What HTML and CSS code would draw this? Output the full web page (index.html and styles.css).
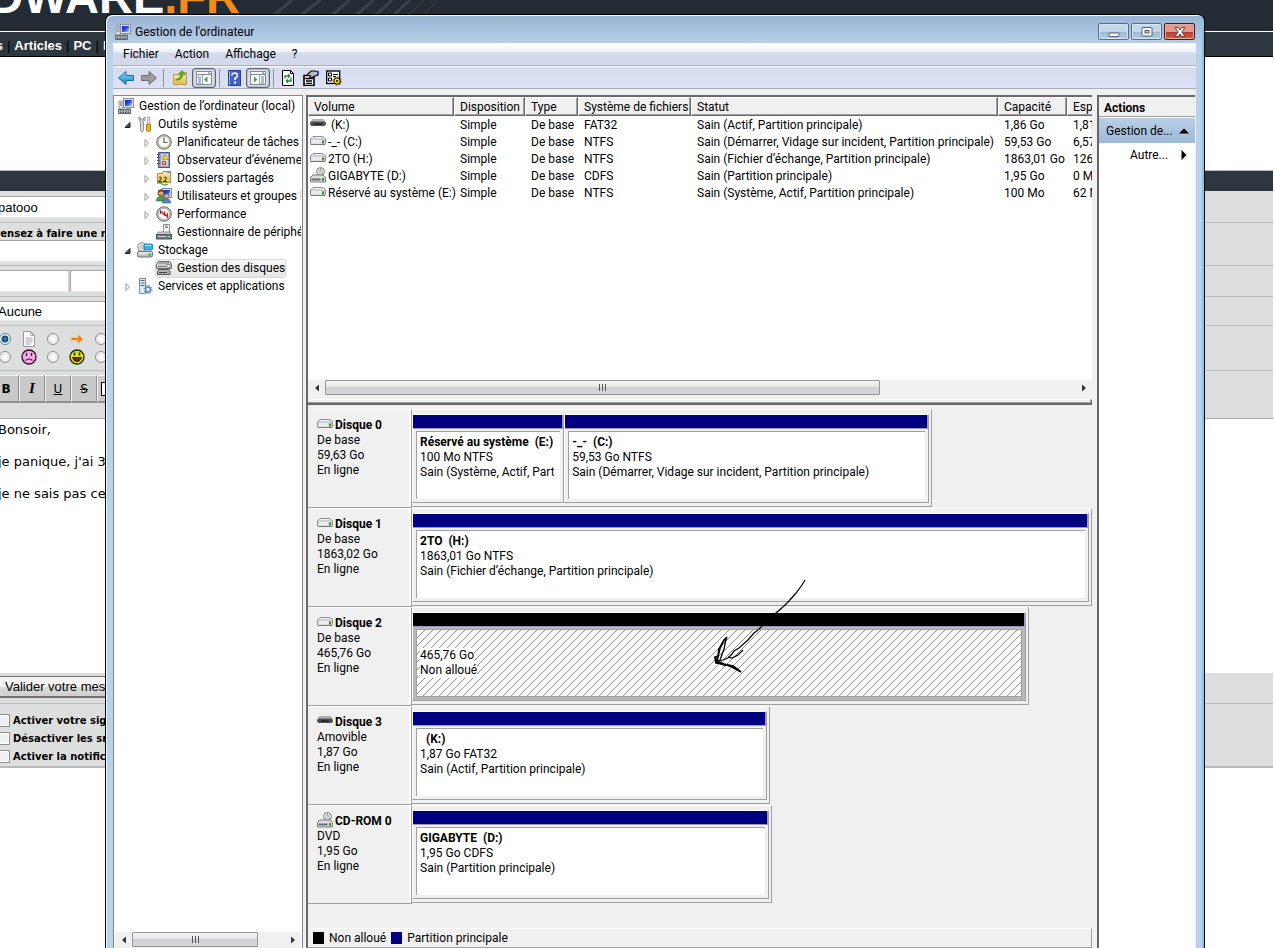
FILE: index.html
```html
<!DOCTYPE html>
<html lang="fr">
<head>
<meta charset="utf-8">
<title>Gestion de l'ordinateur</title>
<link rel="stylesheet" href="styles.css">
</head>
<body>
<svg class="sprite" aria-hidden="true">
  <defs>
    <linearGradient id="metal" x1="0" y1="0" x2="0" y2="1"><stop offset="0" stop-color="#f4f4f4"/><stop offset="1" stop-color="#a9adb0"/></linearGradient>
    <linearGradient id="blue" x1="0" y1="0" x2="0" y2="1"><stop offset="0" stop-color="#8fdcfb"/><stop offset="1" stop-color="#1583cc"/></linearGradient>
    <linearGradient id="screen" x1="0" y1="0" x2="1" y2="1"><stop offset="0" stop-color="#0a1fae"/><stop offset=".5" stop-color="#2850e0"/><stop offset="1" stop-color="#b8d4ff"/></linearGradient>
    <linearGradient id="folder" x1="0" y1="0" x2="0" y2="1"><stop offset="0" stop-color="#fbeeb0"/><stop offset="1" stop-color="#e3b958"/></linearGradient>
  </defs>
  <symbol id="i-computer" viewBox="0 0 16 16">
    <rect x="5.500" y=".5" width="10" height="9" fill="#dfe3e8" stroke="#8a929c"/><rect x="7" y="2" width="7" height="6" fill="url(#screen)"/>
    <path d="M1 3h4v8H1z" fill="#e3e6ea" stroke="#7d858f" stroke-width=".8"/><path d="M2 5h2M2 7h2" stroke="#667"/>
    <path d="M8 10h5v2H8z" fill="#a9afb6"/><path d="M.5 11.500h12v4H.5z" fill="#b4b9c0" stroke="#5d646d"/><path d="M2 13h9M2 14.500h9" stroke="#555c66" stroke-dasharray="1.500 1"/>
  </symbol>
  <symbol id="i-tools" viewBox="0 0 16 16">
    <path d="M2 1v3l1.500 1.500V14c0 2 3 2 3 0V5.500L8 4V1L6.500 2v2h-3V2z" fill="#dcdcdc" stroke="#777" stroke-width=".8"/>
    <path d="M10.500 1h2l.3 7h-2.600z" fill="#eee" stroke="#888" stroke-width=".7"/><path d="M9.500 8.500h4v6q-2 2.500-4 0z" fill="#f0b41c" stroke="#9a6a08" stroke-width=".8"/>
  </symbol>
  <symbol id="i-clock" viewBox="0 0 16 16">
    <circle cx="8" cy="8" r="7.300" fill="#bdbdbd" stroke="#777"/><circle cx="8" cy="8" r="5.700" fill="#fdf8e8" stroke="#a89e80" stroke-width=".6"/><path d="M8 3.500V8.500H11.500" fill="none" stroke="#47668e" stroke-width="1.200"/>
  </symbol>
  <symbol id="i-event" viewBox="0 0 16 16">
    <rect x="2.500" y=".5" width="11" height="15" fill="#8f9fc4" stroke="#4a5a86"/><rect x="5" y="2" width="7" height="12" fill="#d3daea"/><path d="M6 4h5M6 6h5M6 12.500h5" stroke="#7d8cb4" stroke-width=".7"/><path d="M1 2.500h3M1 5.500h3M1 8.500h3M1 11.500h3" stroke="#555"/><path d="M9 2.500l3 5H6.500z" fill="#ffd820" stroke="#a98500" stroke-width=".6"/><circle cx="8" cy="11" r="2.300" fill="#d83030"/><path d="M7 10l2 2m0-2l-2 2" stroke="#fff" stroke-width=".8"/>
  </symbol>
  <symbol id="i-shared" viewBox="0 0 16 16">
    <path d="M1.500 3.500h5l1-2h7v11h-13z" fill="url(#folder)" stroke="#b88c32"/><path d="M11 2.500h3" stroke="#58a0e0"/><path d="M3 7.500q3-1 2 1.500l-2 2.500h3M8 7.500q3-1 2 1.500l-2 2.500h3" fill="none" stroke="#5c481a" stroke-width="1.200"/><path d="M1 13q3-1 5 1q3 2 6 0" fill="none" stroke="#39a865" stroke-width="1.500"/>
  </symbol>
  <symbol id="i-users" viewBox="0 0 16 16">
    <rect x="6.500" y=".5" width="9" height="9" fill="#dce2ea" stroke="#808a98"/><rect x="8" y="2" width="6" height="6" fill="url(#screen)"/><circle cx="5" cy="5" r="3" fill="#d7a978" stroke="#6c4722"/><path d="M2 5q0-4 3-3.500 3.500 0 3 3-3-2-6 .5" fill="#63401f"/><path d="M.5 13q0-5 5-4.500 4 0 4 4.500z" fill="#4a9b52" stroke="#2e6734" stroke-width=".6"/><circle cx="10.500" cy="8" r="2.300" fill="#dcb083" stroke="#6b5030" stroke-width=".6"/><path d="M6.500 15q0-4.500 4-4.500t4 4.500z" fill="#5684c2" stroke="#31517f" stroke-width=".6"/>
  </symbol>
  <symbol id="i-perf" viewBox="0 0 16 16">
    <circle cx="8" cy="8" r="7.300" fill="#c2c2c2" stroke="#6f6f6f"/><circle cx="8" cy="8" r="5.600" fill="#fff" stroke="#888" stroke-width=".5"/><path d="M4.500 8V5l4 4V5M8 7l3.500 4V7" fill="none" stroke="#cc2020" stroke-width="1.200"/>
  </symbol>
  <symbol id="i-device" viewBox="0 0 16 16">
    <path d="M7.500.5h6v8h-6z" fill="#f2f4f6" stroke="#8d949b"/><path d="M9 2h3M9 3.500h3" stroke="#5aa05a"/><path d="M2 8h12l1.500 3h-15z" fill="#cdd1d5" stroke="#70777e" stroke-width=".7"/><rect x=".5" y="10.500" width="15" height="4.500" fill="#737b83" stroke="#4e545a"/><path d="M2 12.500h8" stroke="#c9cdd1"/><path d="M12 12.500h2" stroke="#6f6"/>
  </symbol>
  <symbol id="i-storage" viewBox="0 0 16 16">
    <circle cx="5" cy="5" r="4.300" fill="#ddd" stroke="#888" stroke-width=".8"/><circle cx="5" cy="5" r="1.300" fill="#fff" stroke="#999" stroke-width=".6"/><rect x="7" y="2" width="8.500" height="6" rx="1" fill="#3cb2dc" stroke="#23708e" stroke-width=".8"/><path d="M8 3.500h6" stroke="#c4effc"/><rect x=".5" y="9.500" width="15" height="5.500" rx="1.500" fill="url(#metal)" stroke="#6e7478"/><rect x="11.500" y="11.500" width="2.500" height="2" fill="#3fae3f"/>
  </symbol>
  <symbol id="i-diskmgmt" viewBox="0 0 16 16">
    <path d="M2.500 1.500h11l2 3v4H.5v-4z" fill="#cfcfcf" stroke="#6d6d6d"/><path d="M3 3h10M2 6.500h8" stroke="#777"/><rect x="11" y="4.500" width="3" height="3" fill="#f4f4f4" stroke="#666" stroke-width=".6"/><path d="M2.500 9.500h10l1.500 2v3H1.500v-3z" fill="#b0b0b0" stroke="#555"/><path d="M3 12.500h8" stroke="#444"/>
  </symbol>
  <symbol id="i-services" viewBox="0 0 16 16">
    <path d="M2.500.5h6v15h-6z" fill="#e5eaee" stroke="#7e8a94"/><path d="M3.500 2.500h4M3.500 5h4M3.500 7.500h4" stroke="#4a6d88"/><circle cx="11" cy="11.500" r="2.600" fill="#d9e7f5" stroke="#5f87b5" stroke-width="1.500"/><circle cx="11" cy="11.500" r="4" fill="none" stroke="#5f87b5" stroke-width="1" stroke-dasharray="1.600 1.500"/>
  </symbol>
  <symbol id="i-hdd" viewBox="0 0 16 16">
    <path d="M3 3.500h10l2.500 2.500v4.500q0 1-1 1h-13q-1 0-1-1V6z" fill="#d0d1d2" stroke="#8d9092"/><path d="M3 4.500h10" stroke="#f2f2f2"/><rect x="1.500" y="7" width="10" height="3.500" fill="#ececec"/><rect x="12" y="7.500" width="2" height="3" fill="#38963a"/><path d="M1 11.500h14" stroke="#77797b"/>
  </symbol>
  <symbol id="i-usb" viewBox="0 0 16 16">
    <path d="M2.500 3.500h11L16 7q0 3-2 3H2Q0 10 0 7z" fill="#4d4f51"/><path d="M2.500 3.500h11L15 5.500H1z" fill="#b4b6b8"/><path d="M4 8h8" stroke="#222" stroke-width="1.500"/>
  </symbol>
  <symbol id="i-cd" viewBox="0 0 16 16">
    <circle cx="10.500" cy="4.500" r="4" fill="#ddd8e4" stroke="#8d8d8d"/><path d="M10.500.8v3M12 6l2 1.500" stroke="#76b876"/><circle cx="10.500" cy="4.500" r="1.200" fill="#fff" stroke="#888" stroke-width=".6"/><path d="M3 8h10l2.500 2.500v4.500H.5v-4.500z" fill="#dcdcdc" stroke="#7b7e80"/><rect x="1.500" y="11.500" width="9" height="2" fill="#6a6d70"/><rect x="12" y="11" width="2" height="3" fill="#38963a"/>
  </symbol>
  <symbol id="i-open" viewBox="0 0 8 8"><path d="M6.500 1.500v5h-5z" fill="#444" stroke="#222"/></symbol>
  <symbol id="i-closed" viewBox="0 0 8 8"><path d="M2.500.5L6 4 2.500 7.500z" fill="#fff" stroke="#999"/></symbol>
  <symbol id="i-left" viewBox="0 0 8 8"><path d="M6 .5v7L2 4z" fill="#333"/></symbol>
  <symbol id="i-right" viewBox="0 0 8 8"><path d="M2 .5v7L6 4z" fill="#333"/></symbol>
</svg>

<main class="site">
  <header class="banner">
    <svg class="circuit" viewBox="0 0 320 31" aria-hidden="true"><path d="M0 18L22 0M20 24L50 0M56 20L80 0M80 20L104 0M96 24L122 0M114 24L140 0" stroke="#3a424b" stroke-width="3" fill="none"/><path d="M136 18l18-18M150 18l18-18" stroke="#4a4238" fill="none"/></svg>
    <p class="logo">DWARE<span class="logo-tld">.FR</span></p>
  </header>
  <nav class="site-nav"><a href="#">News</a><i>|</i><a href="#">Articles</a><i>|</i><a href="#">PC</a><i>|</i><a href="#">Image</a></nav>
  <div class="site-gap"></div>
  <form class="post">
    <div class="post-head"></div>
    <div class="post-row row-name"><input class="field" aria-label="Pseudo" value="patooo"></div>
    <div class="post-row row-title"><label class="hint" for="subject">Pensez à faire une recherche</label><input class="field" id="subject"></div>
    <div class="post-row row-split"><input class="field" aria-label="Code"><input class="field" aria-label="Options"></div>
    <div class="post-row row-select"><select class="field" aria-label="Catégorie"><option>Aucune</option></select></div>
    <div class="post-row moods">
      <input type="radio" name="mood" aria-label="Normal" checked>
      <svg viewBox="0 0 16 16"><path d="M2.500.5h7l4 4v11h-11z" fill="#fbfbfb" stroke="#999"/><path d="M9.500.5v4h4M4.500 7h7M4.500 9h7M4.500 11h7M4.500 13h5" fill="none" stroke="#aab"/></svg>
      <input type="radio" name="mood" aria-label="Flèche">
      <svg viewBox="0 0 16 16"><path d="M2 6.500h7V3l5 5-5 5V9.500H2z" fill="#ee8414" stroke="#f8c890" stroke-width=".8"/></svg>
      <input type="radio" name="mood" aria-label="Autre">
      <input type="radio" name="mood" aria-label="Triste">
      <svg viewBox="0 0 16 16"><circle cx="8" cy="8" r="7" fill="#f6a8e6" stroke="#301028" stroke-width="1.300"/><path d="M5.500 4v3M10.500 4v3M4.500 11.500q3.500-3 7 0" fill="none" stroke="#301028" stroke-width="1.200"/></svg>
      <input type="radio" name="mood" aria-label="Content">
      <svg viewBox="0 0 16 16"><circle cx="8" cy="8" r="7" fill="#dbe420" stroke="#202808" stroke-width="1.300"/><path d="M5.500 3.500v3M10.500 3.500v3" stroke="#202808" stroke-width="1.600"/><path d="M3.500 8.500h9q-1 4-4.500 4t-4.500-4z" fill="#7b2a10" stroke="#202808"/></svg>
      <input type="radio" name="mood" aria-label="Divers">
    </div>
    <div class="post-row editor-bar"><button type="button"><b>B</b></button><button type="button"><b class="ital">I</b></button><button type="button"><u>U</u></button><button type="button"><s>S</s></button><button type="button" aria-label="Couleur"><span class="swatch"></span></button></div>
    <textarea class="message" aria-label="Message">Bonsoir,

je panique, j'ai 3 disques

je ne sais pas ce que</textarea>
    <div class="post-row row-send"><button type="button" class="send">Valider votre message</button></div>
    <div class="post-row checks">
      <label><input type="checkbox">Activer votre signature</label>
      <label><input type="checkbox">Désactiver les smilies</label>
      <label><input type="checkbox">Activer la notification</label>
    </div>
  </form>
</main>

<section class="window" aria-label="Gestion de l'ordinateur">
  <header class="titlebar">
    <svg class="ico"><use href="#i-computer"/></svg>
    <h1>Gestion de l'ordinateur</h1>
    <div class="caption">
      <button aria-label="Réduire"><svg viewBox="0 0 12 12"><rect x="1" y="7" width="10" height="3.500" rx=".5" fill="#fff" stroke="#56606e"/></svg></button>
      <button aria-label="Agrandir"><svg viewBox="0 0 12 12"><rect x="1" y="1.500" width="10" height="8.500" rx=".5" fill="#fff" stroke="#56606e"/><rect x="4" y="4.500" width="4" height="2.500" fill="#b9cbe0" stroke="#56606e"/></svg></button>
      <button class="close" aria-label="Fermer"><svg viewBox="0 0 12 12"><path d="M1 1.500h3L6 4l2-2.500h3L7.800 6 11 10.500H8L6 8l-2 2.500H1L4.200 6z" fill="#fff" stroke="#5d4548"/></svg></button>
    </div>
  </header>
  <div class="client">
    <nav class="menubar"><button>Fichier</button><button>Action</button><button>Affichage</button><button>?</button></nav>
    <div class="toolbar">
      <button aria-label="Précédent"><svg viewBox="0 0 16 16"><path d="M8 1.500v4h7.500v5H8v4L.5 8z" fill="url(#blue)" stroke="#1a6ba8"/></svg></button>
      <button aria-label="Suivant"><svg viewBox="0 0 16 16"><path d="M8 1.500v4H.5v5H8v4L15.500 8z" fill="#9b9c9e" stroke="#6d6e70"/></svg></button>
      <span class="sep"></span>
      <button aria-label="Dossier parent"><svg viewBox="0 0 16 16"><path d="M1.500 4.500h5l1-2h7v12h-13z" fill="url(#folder)" stroke="#c39a45"/><path d="M3.500 10Q8 9 9 4.500H6.500L10 .5l3.500 4H11Q10 11 3.500 10z" fill="#58b821" stroke="#2f7a0c" stroke-width=".5"/></svg></button>
      <button class="on" aria-label="Arborescence"><svg viewBox="0 0 16 16"><rect x=".5" y="1.500" width="15" height="13" fill="#fff" stroke="#858b96"/><path d="M1 4.500h14" stroke="#858b96"/><path d="M12 3h2" stroke="#567"/><path d="M6.500 5v9" stroke="#a0a6b0"/><path d="M2 7h3M2 9h3M2 11h3M2 13h3" stroke="#567aa8"/><path d="M11.500 6.500v6L8 9.500z" fill="#3aa83a"/></svg></button>
      <span class="sep near"></span>
      <button aria-label="Aide"><svg viewBox="0 0 16 16"><rect x="2.500" y=".5" width="12" height="15" fill="#3c62cc" stroke="#2b3f92"/><path d="M3.500 1v14" stroke="#9db4ee"/><path d="M6 5.500Q6 3 8.700 3t2.600 2.500Q11.300 7 9 8.500v1.500" fill="none" stroke="#fff" stroke-width="1.600"/><rect x="8" y="11.500" width="2" height="2" fill="#fff"/></svg></button>
      <button class="on" aria-label="Volet Actions"><svg viewBox="0 0 16 16"><rect x=".5" y="1.500" width="15" height="13" fill="#fff" stroke="#858b96"/><path d="M1 4.500h14" stroke="#858b96"/><path d="M12 3h2" stroke="#567"/><path d="M9.500 5v9" stroke="#a0a6b0"/><path d="M11 7h3M11 9h3M11 11h3M11 13h3" stroke="#567aa8"/><path d="M4 6.500v6L7.500 9.500z" fill="#3aa83a"/></svg></button>
      <span class="sep near"></span>
      <button aria-label="Actualiser"><svg viewBox="0 0 16 16"><path d="M2.500.5h8l3 3v12h-11z" fill="#fff" stroke="#000"/><path d="M10.500.5v3h3" fill="none" stroke="#000"/><path d="M5 8.500V6h3M11 7.500V11H8" fill="none" stroke="#18882a" stroke-width="1.300"/><path d="M8 3.500L10.500 6 8 8.500zM8 8.500L5.500 11 8 13.500z" fill="#18882a"/></svg></button>
      <button aria-label="Propriétés"><svg viewBox="0 0 16 16"><path d="M1 5.500h10v10H1z" fill="#fff" stroke="#000" stroke-width="1.600"/><path d="M2 8.500h8M3 11h6M3 13.300h6" stroke="#000" stroke-width="1.300"/><path d="M4 5l4-4h4l3 1v3l-3 1-4 2-2 .5 2-3" fill="#bbb" stroke="#000" stroke-width="1.200"/><path d="M14 1h2v4h-2z" fill="#3b49a5"/></svg></button>
      <button aria-label="Paramètres"><svg viewBox="0 0 16 16"><rect x=".7" y="1" width="13" height="12.500" fill="#fff" stroke="#000" stroke-width="1.300"/><path d="M2.500 3h3v3h-3zM2.500 8h3v3h-3z" fill="none" stroke="#000"/><path d="M7 4.500h5M7 6.500h3" stroke="#000" stroke-width="1.200"/><circle cx="11" cy="11" r="3.200" fill="#ffe100" stroke="#000"/><circle cx="11" cy="11" r="4.200" fill="none" stroke="#5a4e00" stroke-dasharray="1.500 1.800"/><circle cx="11" cy="11" r="1" fill="#000"/></svg></button>
    </div>
    <div class="panes">
      <aside class="tree-pane">
        <div class="tree">
          <a class="node" href="#"><svg class="ico"><use href="#i-computer"/></svg><span>Gestion de l’ordinateur (local)</span></a>
          <a class="node l1" href="#"><svg class="tog"><use href="#i-open"/></svg><svg class="ico"><use href="#i-tools"/></svg><span>Outils système</span></a>
          <a class="node l2" href="#"><svg class="tog"><use href="#i-closed"/></svg><svg class="ico"><use href="#i-clock"/></svg><span>Planificateur de tâches</span></a>
          <a class="node l2" href="#"><svg class="tog"><use href="#i-closed"/></svg><svg class="ico"><use href="#i-event"/></svg><span>Observateur d’événements</span></a>
          <a class="node l2" href="#"><svg class="tog"><use href="#i-closed"/></svg><svg class="ico"><use href="#i-shared"/></svg><span>Dossiers partagés</span></a>
          <a class="node l2" href="#"><svg class="tog"><use href="#i-closed"/></svg><svg class="ico"><use href="#i-users"/></svg><span>Utilisateurs et groupes locaux</span></a>
          <a class="node l2" href="#"><svg class="tog"><use href="#i-closed"/></svg><svg class="ico"><use href="#i-perf"/></svg><span>Performance</span></a>
          <a class="node l2" href="#"><svg class="tog"></svg><svg class="ico"><use href="#i-device"/></svg><span>Gestionnaire de périphériques</span></a>
          <a class="node l1" href="#"><svg class="tog"><use href="#i-open"/></svg><svg class="ico"><use href="#i-storage"/></svg><span>Stockage</span></a>
          <a class="node l2" href="#" aria-current="true"><svg class="tog"></svg><span class="picked"><svg class="ico"><use href="#i-diskmgmt"/></svg><span>Gestion des disques</span></span></a>
          <a class="node l1" href="#"><svg class="tog"><use href="#i-closed"/></svg><svg class="ico"><use href="#i-services"/></svg><span>Services et applications</span></a>
        </div>
        <div class="hscroll"><button aria-label="Défiler à gauche"><svg><use href="#i-left"/></svg></button><div class="track"><div class="thumb tree-thumb"><i></i><i></i><i></i></div></div><button aria-label="Défiler à droite"><svg><use href="#i-right"/></svg></button></div>
      </aside>

      <div class="center">
        <div class="volumes">
          <table>
            <colgroup><col class="c-vol"><col class="c-disp"><col class="c-type"><col class="c-fs"><col class="c-stat"><col class="c-cap"><col class="c-free"></colgroup>
            <thead><tr><th>Volume</th><th>Disposition</th><th>Type</th><th>Système de fichiers</th><th>Statut</th><th>Capacité</th><th>Espace libre</th></tr></thead>
            <tbody>
              <tr><td><svg class="ico"><use href="#i-usb"/></svg>&nbsp;(K:)</td><td>Simple</td><td>De base</td><td>FAT32</td><td>Sain (Actif, Partition principale)</td><td>1,86 Go</td><td>1,81 Go</td></tr>
              <tr><td><svg class="ico"><use href="#i-hdd"/></svg>-_- (C:)</td><td>Simple</td><td>De base</td><td>NTFS</td><td>Sain (Démarrer, Vidage sur incident, Partition principale)</td><td>59,53 Go</td><td>6,57 Go</td></tr>
              <tr><td><svg class="ico"><use href="#i-hdd"/></svg>2TO (H:)</td><td>Simple</td><td>De base</td><td>NTFS</td><td>Sain (Fichier d’échange, Partition principale)</td><td>1863,01 Go</td><td>1269,00 Go</td></tr>
              <tr><td><svg class="ico"><use href="#i-cd"/></svg>GIGABYTE (D:)</td><td>Simple</td><td>De base</td><td>CDFS</td><td>Sain (Partition principale)</td><td>1,95 Go</td><td>0 Mo</td></tr>
              <tr><td><svg class="ico"><use href="#i-hdd"/></svg>Réservé au système (E:)</td><td>Simple</td><td>De base</td><td>NTFS</td><td>Sain (Système, Actif, Partition principale)</td><td>100 Mo</td><td>62 Mo</td></tr>
            </tbody>
          </table>
        </div>
        <div class="hscroll"><button aria-label="Défiler à gauche"><svg><use href="#i-left"/></svg></button><div class="track"><div class="thumb list-thumb"><i></i><i></i><i></i></div></div><button aria-label="Défiler à droite"><svg><use href="#i-right"/></svg></button></div>
        <div class="splitter"></div>
        <div class="disks">
          <div class="disk">
            <div class="disk-info"><h2><svg class="ico"><use href="#i-hdd"/></svg>Disque 0</h2><p>De base</p><p>59,63 Go</p><p>En ligne</p></div>
            <div class="lane"><div class="strip" style="width:76.500%">
              <div class="part" style="flex:151"><div class="bar"></div><div class="body"><h3>Réservé au système &nbsp;(E:)</h3><p>100 Mo NTFS</p><p>Sain (Système, Actif, Partition principale)</p></div></div>
              <div class="part" style="flex:365"><div class="bar"></div><div class="body"><h3>-_- &nbsp;(C:)</h3><p>59,53 Go NTFS</p><p>Sain (Démarrer, Vidage sur incident, Partition principale)</p></div></div>
            </div></div>
          </div>
          <div class="disk">
            <div class="disk-info"><h2><svg class="ico"><use href="#i-hdd"/></svg>Disque 1</h2><p>De base</p><p>1863,02 Go</p><p>En ligne</p></div>
            <div class="lane"><div class="strip" style="width:100%">
              <div class="part" style="flex:1"><div class="bar"></div><div class="body"><h3>2TO &nbsp;(H:)</h3><p>1863,01 Go NTFS</p><p>Sain (Fichier d’échange, Partition principale)</p></div></div>
            </div></div>
          </div>
          <div class="disk">
            <div class="disk-info"><h2><svg class="ico"><use href="#i-hdd"/></svg>Disque 2</h2><p>De base</p><p>465,76 Go</p><p>En ligne</p></div>
            <div class="lane"><div class="strip" style="width:90.700%">
              <div class="part free" style="flex:1"><div class="bar"></div><div class="body"><h3>&nbsp;</h3><p>465,76 Go</p><p>Non alloué</p></div></div>
            </div></div>
          </div>
          <div class="disk">
            <div class="disk-info"><h2><svg class="ico"><use href="#i-usb"/></svg>Disque 3</h2><p>Amovible</p><p>1,87 Go</p><p>En ligne</p></div>
            <div class="lane"><div class="strip" style="width:52.700%">
              <div class="part" style="flex:1"><div class="bar"></div><div class="body"><h3>&nbsp; (K:)</h3><p>1,87 Go FAT32</p><p>Sain (Actif, Partition principale)</p></div></div>
            </div></div>
          </div>
          <div class="disk">
            <div class="disk-info"><h2><svg class="ico"><use href="#i-cd"/></svg>CD-ROM 0</h2><p>DVD</p><p>1,95 Go</p><p>En ligne</p></div>
            <div class="lane"><div class="strip" style="width:53%">
              <div class="part" style="flex:1"><div class="bar"></div><div class="body"><h3>GIGABYTE &nbsp;(D:)</h3><p>1,95 Go CDFS</p><p>Sain (Partition principale)</p></div></div>
            </div></div>
          </div>
          <svg class="pointer" viewBox="0 0 94 96" aria-hidden="true"><path d="M92 1l-3 5-6 8-7 8-5 5-8 7-4 3-9 9-5 5-4 3-6 7-9 8-5 3-2 3-4 4-5 2-8 1" stroke-width="1.200"/><path d="M14 58l-3 3-5 9-1 7-3 1 1 6 8 1 8 3 9 5M14 59l-3 2-4 8-3 13 7 3 9 2 8 6" stroke-width="1.700"/><path d="M13 60l-2 10-4 11M2 78l3 6 8 3" stroke-width="1.300"/><path d="M15 78l4 1 6-3 5-5" stroke-width="1.200"/></svg>
        </div>
        <footer class="legend"><i class="key key-free"></i>Non alloué<i class="key"></i>Partition principale</footer>
      </div>

      <aside class="actions">
        <h2>Actions</h2>
        <button class="group">Gestion de...<svg viewBox="0 0 10 6"><path d="M0 5.500L5 .5l5 5z"/></svg></button>
        <button class="more">Autre...<svg viewBox="0 0 6 10"><path d="M.5 0l5 5-5 5z"/></svg></button>
      </aside>
    </div>
  </div>
</section>
</body>
</html>
```

FILE: styles.css
```css
* { box-sizing: border-box; }
:root {
  --ui: Roboto, "Open Sans", sans-serif;
  --face: #f0f0f0;
  --line: #a0a0a0;
  --navy: #000080;
}
body { margin: 0; min-height: 100vh; overflow: hidden; position: relative; background: #fff; font: 12px/15px var(--ui); color: #000; }
h1, h2, h3, p { margin: 0; font-size: 12px; }
button { font: inherit; color: inherit; border: 0; padding: 0; background: none; }
a { color: inherit; text-decoration: none; }
.sprite { position: absolute; width: 0; height: 0; }
.ico { width: 16px; height: 16px; flex: none; }

/* Forum page behind the window */
.site { margin-right: 2px; overflow: hidden; }
.banner { height: 31px; background: #232b35; overflow: hidden; position: relative; }
.circuit { position: absolute; left: 270px; top: 0; width: 320px; height: 31px; }
.logo { display: flex; justify-content: flex-end; width: 240px; margin-top: -28px; font: bold 47px/50px "Liberation Sans", Arial, sans-serif; color: #fff; }
.logo-tld { color: #f08c1c; }
.site-nav { display: flex; gap: 4px; height: 26px; margin-left: -31px; padding-top: 4px; background: #2e363f; border-top: 1px solid #fff; border-bottom: 1px solid #000; font: bold 13px/20px "Liberation Sans", Arial, sans-serif; color: #fff; }
.site-nav i { font-style: normal; font-weight: normal; color: #000; }
.site-gap { height: 114px; border-bottom: 1px solid #bbb; }
.post { margin-left: -7px; background: #dddfde; font-family: "DejaVu Sans", Verdana, sans-serif; }
.post-head { height: 20px; background: #2e363f; }
.post-row { border-bottom: 1px solid #babcbb; }
.field { display: block; width: 600px; height: 22px; padding: 0 4px; border: 1px solid #a6a8a7; border-bottom-color: #e8e8e8; background: #fff; font: 13px "Liberation Sans", Arial, sans-serif; appearance: none; border-radius: 0; }
.row-name { height: 32px; padding-top: 5px; }
.row-title { height: 43px; padding-top: 5px; }
.hint { display: block; font-size: 10px; font-weight: bold; line-height: 12px; white-space: nowrap; }
.row-split { display: flex; height: 31px; padding-top: 4px; }
.row-split .field:first-child { width: 77px; border-right: 2px solid #ccd; }
.row-select { height: 29px; padding-top: 4px; }
.row-select .field { height: 20px; }
.moods { display: grid; grid-template-columns: repeat(5, 24px); grid-auto-rows: 18px; align-items: center; justify-items: center; height: 45px; padding-top: 4px; }
.moods svg { width: 16px; height: 16px; }
.moods input { appearance: none; width: 12px; height: 12px; margin: 0; border: 1px solid #8e8f8f; border-radius: 50%; background: radial-gradient(#fff, #d5d8da); box-shadow: inset 0 0 0 1px #f4f4f4; }
.moods input:checked { background: radial-gradient(circle, #1c8cc4 0 1px, #123a5a 3px, #f4f4f4 4px); border-color: #4d7fa5; }
.editor-bar { display: flex; height: 32px; margin-top: 4px; border: 0; padding-bottom: 4px; }
.editor-bar button { width: 26px; background: #c9c9c9; border: 1px solid #f4f4f4; border-right-color: #8f8f8f; border-bottom: 2px solid #8f8f8f; font: 12px "DejaVu Sans", sans-serif; }
.ital { font-family: "Liberation Serif", serif; font-style: italic; font-size: 15px; }
.swatch { display: block; width: 14px; height: 14px; margin-left: 3px; border: 1px solid #000; background: #fff; }
.message { display: block; width: 100%; height: 255px; margin-top: 11px; padding: 3px 5px; border: 0; border-top: 1px solid #aaa; resize: none; overflow: hidden; font: 13px/16px "DejaVu Sans", Verdana, sans-serif; }
.row-send { height: 31px; padding-top: 3px; }
.send { width: 200px; height: 22px; padding-left: 11px; text-align: left; border: 1px solid #707070; border-bottom-width: 2px; background: linear-gradient(#f2f2f2 50%, #dcdcdc 50%, #cfcfcf); font: 13px "Liberation Sans", Arial, sans-serif; }
.checks { height: 64px; padding-top: 7px; border-bottom: 2px solid #bababa; }
.checks label { display: flex; align-items: center; gap: 3px; height: 18px; font-size: 10px; font-weight: bold; white-space: nowrap; padding-left: 4px; }
.checks input { appearance: none; width: 13px; height: 13px; margin: 0; border: 1px solid #8e8f8f; background: #f0f0f2; box-shadow: inset 0 0 0 1px #fff; }

/* Application window */
.window { position: absolute; inset: 14px 70px 0 105px; display: flex; flex-direction: column; padding: 0 8px 0 7px; border: solid #000; border-width: 1px 1px 0; border-radius: 7px 7px 0 0; background: linear-gradient(#98b4d2, #b9d1ea 30px); box-shadow: inset 1px 1px 0 #f2f9ff, inset -2px 0 0 #72cdee; }
.titlebar { display: flex; align-items: center; height: 28px; padding: 6px 0 0 2px; flex: none; }
.titlebar h1 { font-weight: normal; padding-left: 4px; flex: 1; }
.caption { display: flex; gap: 2px; align-self: flex-start; padding: 2px 1px 0 0; }
.caption button { display: grid; place-items: center; width: 31px; height: 17px; border: 1px solid #566e8c; border-radius: 2px; background: linear-gradient(#c3d6ea 50%, #9cb6d2 50%, #b5cde6); box-shadow: inset 0 0 0 1px #d8e6f4; }
.caption svg { width: 12px; height: 12px; }
.caption .close { border-color: #4a1820; background: linear-gradient(#df9a8b 50%, #b8362a 50%, #d0604a); box-shadow: inset 0 0 0 1px #eaa99b; }
.client { display: flex; flex-direction: column; flex: 1; min-height: 0; background: var(--face); }
.menubar { display: flex; gap: 16px; height: 22px; padding: 1px 0 0 10px; flex: none; background: linear-gradient(#fff, #eef1f8 9px, #d4daed 10px, #d4daed); }
.toolbar { display: flex; align-items: center; height: 24px; padding: 2px 0 0 2px; flex: none; border-top: 1px solid #a9adba; border-bottom: 1px solid #a9adba; background: linear-gradient(#fff, #d6dcef 2px, #dce2f3); }
.toolbar button { display: grid; place-items: center; width: 22px; height: 20px; margin-right: 1px; }
.toolbar svg { width: 16px; height: 16px; }
.toolbar .on { width: 24px; border: 1px solid #5e6674; border-radius: 3px; background: #dde1ea; box-shadow: inset 0 0 2px #5e6674; }
.sep { width: 1px; height: 18px; margin: 0 5px 0 2px; background: #8a90a0; }
.sep.near { margin: 0 3px 0 2px; }
.panes { display: grid; grid-template-columns: 190px minmax(0, 1fr) 99px; gap: 3px; flex: 1; min-height: 0; padding-top: 6px; }

.tree-pane { display: flex; flex-direction: column; min-width: 0; padding: 0 1px; border: solid #828790; border-width: 1px 1px 0; background: #fff; }
.tree { flex: 1; overflow: hidden; padding-top: 1px; }
.node { display: flex; align-items: center; height: 18px; padding-left: 3px; gap: 5px; white-space: nowrap; }
.node.l1 { padding-left: 8px; }
.node.l2 { padding-left: 27px; }
.tog { width: 9px; height: 8px; flex: none; margin-top: 2px; }
.picked { display: flex; align-items: center; gap: 5px; height: 17px; border-radius: 2px; background: linear-gradient(#f8f8f8, #e5e5e5); box-shadow: 0 0 0 1px #d9d9d9; }

.hscroll { display: flex; height: 16px; flex: none; background: var(--face); }
.hscroll button { display: grid; place-items: center; width: 17px; }
.hscroll svg { width: 8px; height: 8px; }
.track { flex: 1; }
.thumb { display: flex; align-items: center; justify-content: center; gap: 2px; height: 15px; border: 1px solid #979797; border-radius: 1px; background: linear-gradient(#f5f5f5, #e6e6e8 50%, #cfd0d3 50%, #d5d6d8); }
.thumb i { width: 1px; height: 7px; background: #555; }
.tree-thumb { width: 83%; }
.list-thumb { width: 74%; }

.center { display: flex; flex-direction: column; min-width: 0; border: solid #696969; border-width: 2px 0 0 2px; margin-right: 2px; }
.volumes { height: 283px; flex: none; overflow: hidden; background: #fff; }
table { table-layout: fixed; width: 100%; min-width: 830px; border-collapse: separate; border-spacing: 0; }
.c-vol { width: 146px; } .c-disp { width: 71px; } .c-type { width: 53px; } .c-fs { width: 113px; } .c-stat { width: 307px; } .c-cap { width: 69px; }
th { height: 19px; padding: 1px 5px 0; text-align: left; font-weight: normal; background: var(--face); border: 1px solid #fff; border-right-color: #696969; border-bottom-color: #696969; box-shadow: inset -1px -1px 0 #a0a0a0; white-space: nowrap; overflow: hidden; }
td { height: 17px; padding: 0 0 0 6px; white-space: nowrap; overflow: hidden; line-height: 17px; }
tbody tr:first-child td { height: 18px; padding-top: 1px; }
td:first-child { padding-left: 2px; overflow: visible; }
td .ico { vertical-align: middle; margin: -3px 2px 0 0; }
.splitter { height: 6px; margin-top: 3px; flex: none; border: solid #696969; border-width: 0 1px 2px 0; border-top: 1px solid #fff; box-shadow: inset -1px -1px 0 #a0a0a0; }

.disks { position: relative; flex: 1; padding-top: 4px; min-height: 0; overflow: hidden; }
.disk { display: grid; grid-template-columns: 104px minmax(0, 1fr); height: 99px; }
.disk-info { padding: 8px 0 0 9px; border: solid var(--line); border-width: 0 1px 1px 0; border-top: 1px solid #fff; box-shadow: inset -2px 0 0 #fff; }
.disk-info h2 { display: flex; align-items: center; height: 15px; gap: 2px; }
.disk-info .ico { margin-top: -3px; }
.lane { min-width: 0; }
.strip { display: flex; height: 98px; padding: 4px 2px 3px 0; border: solid var(--line); border-width: 0 1px 1px 0; border-top: 1px solid #fff; }
.part { display: flex; flex-direction: column; min-width: 0; border: 1px solid #fff; border-right: 1px solid var(--line); border-bottom: 1px solid var(--line); }
.bar { height: 14px; flex: none; background: var(--navy); border: solid #9a9ab8; border-width: 0 1px 1px 0; }
.body { flex: 1; margin: 2px 3px 3px; padding: 3px 6px 0 3px; border: solid var(--line); border-width: 1px 0 0 1px; background: #fff; white-space: nowrap; min-height: 0; }
.body h3, .body p { overflow: hidden; }
.free { background: #b8b8b8; }
.free .bar { background: #000; }
.free .body { border-width: 1px; background: linear-gradient(135deg, #fff 45%, #8c8c8c 50%, #fff 55%) 0 0 / 8px 8px; }
.free .body p { width: max-content; background: #fff; }
.pointer { position: absolute; left: 405px; top: 174px; width: 94px; height: 96px; fill: none; stroke: #000; }
.legend { display: flex; align-items: center; height: 20px; flex: none; padding-left: 5px; border: solid var(--line); border-width: 0 1px 1px 0; border-top: 1px solid #fff; }
.key { width: 11px; height: 12px; margin: 0 5px; background: var(--navy); }
.key-free { margin-left: 0; background: #000; }

.actions { border: solid #696969; border-width: 2px 0 0 2px; background: #fff; margin-right: 1px; }
.actions h2 { height: 20px; padding: 4px 5px 0; background: var(--face); border-bottom: 1px solid var(--line); }
.actions button { display: flex; align-items: center; justify-content: space-between; width: 100%; }
.actions .group { height: 25px; margin-top: 1px; padding: 1px 6px 0 7px; background: linear-gradient(#b9cfe6, #9db9d8); }
.group svg { width: 10px; height: 6px; }
.actions .more { height: 24px; padding: 0 8px 0 31px; }
.more svg { width: 6px; height: 10px; }
```
